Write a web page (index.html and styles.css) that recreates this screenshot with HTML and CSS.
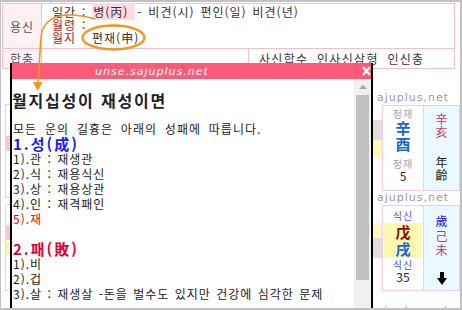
FILE: index.html
```html
<!DOCTYPE html>
<html lang="ko">
<head>
<meta charset="utf-8">
<title>월지십성</title>
<link rel="stylesheet" href="styles.css">
</head>
<body>
<div class="frame">
  <div class="info">
    <div class="row r1">
      <div class="lab">용신</div>
      <div class="val">
        <div class="ln">일간 : <span class="hl">병(丙)</span>- 비견(시) 편인(일) 비견(년)</div>
        <div class="ln"><span class="k">월령</span> :</div>
        <div class="ln"><span class="k kw">월지</span>편재(申)</div>
      </div>
    </div>
    <div class="row r2">
      <div class="lab">합충</div>
      <div class="mid"></div>
      <div class="val2">사신합수 인사신삼형 인신충</div>
    </div>
  </div>

  <div class="lower">
    <div class="lcol">
      <div class="lcard lc1"><div class="fill f-pink"></div></div>
      <div class="lcard lc2"><div class="fill f-pink f-a"></div><div class="fill f-yel"></div></div>
    </div>
    <div class="rcol">
      <div class="tag"><span>sajuplus,net</span></div>
      <div class="pill">
        <div class="nb nb1"><div class="b-gray"></div><div class="b-yel"></div></div>
        <div class="card">
          <div class="cl cl1">
            <div class="sm">정재</div>
            <div class="stem">辛</div>
            <div class="stem">酉</div>
            <div class="sm sm-gap">정재</div>
            <div class="num">5</div>
          </div>
          <div class="cr cr1">
            <div class="ch crim">辛</div>
            <div class="ch crim">亥</div>
            <div class="ch blk gap16">年</div>
            <div class="ch blk">齡</div>
          </div>
        </div>
      </div>
      <div class="tag t2"><span>sajuplus,net</span></div>
      <div class="pill">
        <div class="nb nb2"><div class="b-yel"></div><div class="b-gray"></div></div>
        <div class="card">
          <div class="cl cl2">
            <div class="sm sblue">식신</div>
            <div class="yel">
              <div class="stem dred">戊</div>
              <div class="stem">戌</div>
            </div>
            <div class="sm sblue sm-gap1">식신</div>
            <div class="num">35</div>
          </div>
          <div class="cr cr2">
            <div class="ch blue">歲</div>
            <div class="ch crim gap2">己</div>
            <div class="ch crim">未</div>
            <svg class="down" width="10" height="13" viewBox="0 0 10 13"><rect x="3" y="0" width="4" height="7" fill="#000"/><polygon points="0,6 10,6 5,13" fill="#000"/></svg>
          </div>
        </div>
      </div>
      <div class="tag t3"><span>sajuplus,net</span></div>
    </div>
  </div>

  <div class="popup">
    <div class="ptitle">
      <span class="pt">unse.sajuplus.net</span>
      <svg class="close" width="9" height="10" viewBox="0 0 9 10"><path d="M1 1 L8 9 M8 1 L1 9" stroke="#fff" stroke-width="2.2" fill="none"/></svg>
    </div>
    <div class="pbody">
      <div class="pcontent">
        <h1 class="ph">월지십성이 재성이면</h1>
        <div class="l para">모든 운의 길흉은 아래의 성패에 따릅니다.</div>
        <div class="l big c-blue">1.성(成)</div>
        <div class="l">1).관 : 재생관</div>
        <div class="l">2).식 : 재용식신</div>
        <div class="l">3).상 : 재용상관</div>
        <div class="l">4).인 : 재격패인</div>
        <div class="l c-red">5).재</div>
        <div class="l">&nbsp;</div>
        <div class="l big c-crim">2.패(敗)</div>
        <div class="l">1).비</div>
        <div class="l">2).겁</div>
        <div class="l">3).살 : 재생살 -돈을 벌수도 있지만 건강에 심각한 문제</div>
      </div>
      <div class="sbar"><div class="up"></div><div class="thumb"></div></div>
    </div>
  </div>

  <svg class="annot" width="462" height="310" viewBox="0 0 462 310">
    <ellipse cx="113.5" cy="37.5" rx="31" ry="12" fill="none" stroke="#f7931e" stroke-width="2.4"/>
    <path d="M95 19 C70 12, 44 12, 41 37 L38 83" fill="none" stroke="#f7931e" stroke-width="1.5"/>
    <polygon points="33,82 42.5,82 37.8,91" fill="#f7931e"/>
  </svg>
</div>
</body>
</html>
```

FILE: styles.css
```css
body {
  margin: 0;
  background: #fff;
}

.frame {
  position: relative;
  width: 462px;
  height: 310px;
  box-sizing: border-box;
  border-style: solid;
  border-color: #c2c2c2;
  border-width: 2px 2px 2px 1px;
  overflow: hidden;
  background: #fff;
  font-family: "Noto Sans CJK KR", sans-serif;
  font-size: 12px;
  color: #333;
}

/* ---- top info table ---- */
.info {
  margin: 1px 0 0 1px;
  width: 453px;
  box-sizing: border-box;
  border: 1px solid #f2bfca;
}
.row {
  display: flex;
}
.r1 {
  height: 45px;
  box-sizing: border-box;
  border-bottom: 1px solid #f2bfca;
}
.r2 {
  height: 19px;
}
.lab {
  width: 38px;
  flex: none;
  border-right: 1px solid #f2bfca;
  background: #fff0f3;
  display: flex;
  align-items: center;
  justify-content: center;
  color: #555;
  letter-spacing: 1px;
}
.val {
  padding: 1px 0 0 10px;
  letter-spacing: 1px;
  word-spacing: 1.5px;
}
.ln {
  line-height: 13px;
  white-space: nowrap;
}
.hl {
  background: #ffdce3;
  padding: 0 7px 0 1px;
  margin-right: 2px;
}
.k {
  color: #b02020;
}
.kw {
  display: inline-block;
  width: 40px;
}
.mid {
  width: 206px;
  flex: none;
  border-right: 1px solid #f2bfca;
}
.val2 {
  padding-left: 10px;
  line-height: 19px;
  letter-spacing: 1.3px;
  word-spacing: 4px;
  white-space: nowrap;
}

/* ---- lower background ---- */
.lower {
  display: flex;
  justify-content: space-between;
}
.lcol {
  padding-left: 4px;
}
.lcard {
  width: 60px;
  box-sizing: border-box;
  border: 1px solid #f5cbe9;
}
.lc1 {
  margin-top: 35px;
  height: 94px;
}
.lc2 {
  margin-top: 6px;
  height: 87px;
}
.fill {
  height: 15px;
}
.lc1 .fill {
  margin-top: 31px;
}
.f-a {
  margin-top: 20px;
}
.f-pink {
  background: #f6c9d1;
}
.f-yel {
  margin-top: 1px;
  background: #fbf7b4;
}

.rcol {
  width: 87px;
  box-sizing: border-box;
  padding-top: 21px;
}
.tag {
  display: flex;
  justify-content: flex-end;
  overflow: hidden;
  margin-left: 3px;
  height: 15px;
  line-height: 15px;
  padding-right: 11px;
  font-family: "DejaVu Sans", sans-serif;
  font-size: 11px;
  letter-spacing: 1px;
  color: #9a9a9a;
  white-space: nowrap;
}
.tag span {
  flex: none;
}
.t2 {
  height: 14px;
  line-height: 14px;
}
.t3 {
  margin-top: 12px;
}
.pill {
  display: flex;
  height: 86px;
}
.nb {
  width: 9px;
  flex: none;
}
.b-gray {
  height: 20px;
  background: #dedede;
}
.b-yel {
  background: #fdf9bb;
}
.nb1 .b-gray {
  margin-top: 15px;
}
.nb1 .b-yel {
  height: 17px;
}
.nb2 .b-yel {
  margin-top: 18px;
  height: 15px;
}
.card {
  flex: 1;
  display: flex;
  border: 1px solid #f5c8ee;
}
.cl {
  width: 40px;
  flex: none;
  border-right: 1px solid #f5c8ee;
  text-align: center;
}
.cl1 {
  padding-top: 2px;
}
.cl2 {
  padding-top: 4px;
}
.sm {
  font-size: 10px;
  line-height: 12px;
  color: #a5a5a5;
  letter-spacing: 1px;
}
.sblue {
  color: #4a4aff;
}
.sm-gap {
  margin-top: 6px;
}
.sm-gap1 {
  margin-top: 1px;
}
.stem {
  font-size: 15px;
  font-weight: bold;
  line-height: 16px;
  color: #1565d8;
}
.yel {
  margin: 1px 1px 0;
  height: 35px;
  background: #fcf8b0;
}
.yel .stem {
  line-height: 17px;
}
.dred {
  color: #8b0a0a;
}
.num {
  font-size: 12px;
  line-height: 12px;
  color: #222;
}
.cr {
  flex: 1;
  background: #eaf9ff;
  text-align: center;
}
.cr1 {
  padding-top: 5.5px;
}
.cr2 {
  padding-top: 7.5px;
}
.ch {
  font-size: 12px;
  line-height: 13.5px;
}
.crim {
  color: #cc3366;
}
.blk {
  color: #222;
}
.blue {
  color: #1010ee;
}
.gap16 {
  margin-top: 16px;
}
.gap2 {
  margin-top: 2px;
}
.down {
  display: block;
  margin: 15.5px auto 0;
}

/* ---- popup ---- */
.popup {
  position: absolute;
  left: 9px;
  top: 61px;
  width: 363px;
  height: 262px;
  box-sizing: border-box;
  border-left: 2px solid #000;
  border-right: 2px solid #000;
  background: #fff;
  display: flex;
  flex-direction: column;
}
.ptitle {
  height: 16px;
  flex: none;
  background: #ff5a7a;
  display: flex;
  align-items: center;
  justify-content: space-between;
  padding: 0 0 0 83px;
}
.pt {
  font-family: "DejaVu Sans", sans-serif;
  font-style: italic;
  font-size: 11px;
  letter-spacing: 1px;
  color: #fff;
}
.close {
  display: block;
}
.pbody {
  flex: 1;
  display: flex;
  min-height: 0;
}
.pcontent {
  flex: 1;
  padding-top: 10px;
  color: #222;
  overflow: hidden;
}
.ph {
  margin: 0 0 10px;
  font-size: 16px;
  font-weight: bold;
  line-height: 22px;
  letter-spacing: 1.8px;
  white-space: nowrap;
}
.l {
  line-height: 15px;
  padding-left: 1px;
  letter-spacing: 1px;
  word-spacing: 1px;
  white-space: nowrap;
}
.para {
  word-spacing: 3.5px;
}
.big {
  font-size: 15px;
  font-weight: bold;
  letter-spacing: 2px;
}
.c-blue {
  color: #1a1aff;
}
.c-crim {
  color: #dd0033;
}
.c-red {
  color: #ee0000;
}
.sbar {
  width: 17px;
  flex: none;
  background: #f0f0f0;
  padding-top: 6px;
  box-sizing: border-box;
}
.up {
  width: 0;
  height: 0;
  margin: 0 auto;
  border-left: 4px solid transparent;
  border-right: 4px solid transparent;
  border-bottom: 4px solid #a3a3a3;
}
.thumb {
  margin: 6px 0 0 2px;
  width: 13px;
  height: 185px;
  background: #c1c1c1;
}

/* ---- annotation overlay ---- */
.annot {
  position: absolute;
  left: -1px;
  top: -2px;
  pointer-events: none;
}
```
